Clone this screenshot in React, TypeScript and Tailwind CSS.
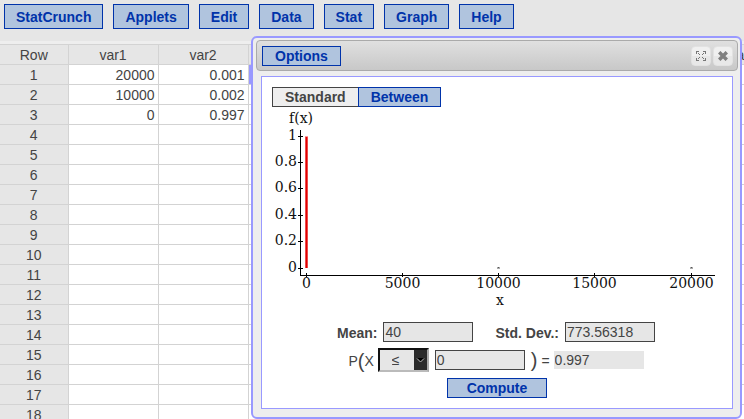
import { useState } from "react";

const menus = ["StatCrunch", "Applets", "Edit", "Data", "Stat", "Graph", "Help"];
const columns = ["var1", "var2", "var3", "var4", "var5", "var6", "var7", "var8"];
const rows = Array.from({ length: 20 }, (_, i) => i + 1);
const data: Record<number, string[]> = {
  1: ["20000", "0.001"],
  2: ["10000", "0.002"],
  3: ["0", "0.997"],
};

const buttonStyle = "border border-[#0033aa] bg-[#b0c4de] font-bold text-[#0033aa]";
const fieldStyle = "h-5 w-[90px] border border-[#444] bg-[#e6e6e6] px-px";
const headCell = "border-[#d3d3d3] px-0 pb-0 pt-0.5 font-normal leading-[17px]";

function DataTable() {
  return (
    <table className="w-[788px] table-fixed border-collapse bg-white text-center">
      <thead>
        <tr className="h-5 bg-[#e6e6e6]">
          <th className={`w-[68px] border-y border-r ${headCell}`}>Row</th>
          {columns.map((name) => (
            <th key={name} className={`w-[90px] border ${headCell}`}>
              {name}
            </th>
          ))}
        </tr>
      </thead>
      <tbody>
        {rows.map((row) => (
          <tr key={row} className="h-5">
            <th className={`border-y border-r bg-[#e6e6e6] ${headCell}`}>{row}</th>
            {columns.map((name, i) => (
              <td
                key={name}
                className={
                  row === 1 && i === 2
                    ? "border border-[#d3d3d3] p-0 shadow-[inset_0_0_0_4px_#9999ff]"
                    : "border border-[#d3d3d3] pb-0 pl-0 pr-[3px] pt-0.5 text-right leading-[17px]"
                }
              >
                {data[row]?.[i]}
              </td>
            ))}
          </tr>
        ))}
      </tbody>
    </table>
  );
}

const yTicks = [
  { y: 28, label: "1" },
  { y: 54, label: "0.8" },
  { y: 80, label: "0.6" },
  { y: 107, label: "0.4" },
  { y: 133, label: "0.2" },
  { y: 160, label: "0" },
];
const xTicks = [
  { x: 44, label: "0" },
  { x: 140, label: "5000" },
  { x: 236, label: "10000" },
  { x: 332, label: "15000" },
  { x: 429, label: "20000" },
];

function DensityChart() {
  return (
    <svg
      viewBox="0 0 470 207"
      className="block w-full font-['DejaVu_Serif',serif] text-[14px]"
      role="img"
      aria-label="Probability function f(x)"
    >
      <g fill="#111">
        <text x="27" y="16">f(x)</text>
        {yTicks.map((t) => (
          <text key={t.label} x="35" y={t.y + 5} textAnchor="end">{t.label}</text>
        ))}
        {xTicks.map((t) => (
          <text key={t.label} x={t.x + 0.5} y="181" textAnchor="middle">{t.label}</text>
        ))}
        <text x="238" y="198" textAnchor="middle">x</text>
      </g>
      <g fill="#000">
        <rect x="38" y="23" width="1" height="146" />
        <rect x="38" y="168" width="415" height="1" />
        {yTicks.map((t) => (
          <rect key={t.label} x="36" y={t.y + 1} width="5" height="1" />
        ))}
        {xTicks.map((t) => (
          <rect key={t.label} x={t.x} y="166" width="1" height="4" />
        ))}
      </g>
      <rect x="43" y="29" width="3" height="132" fill="#ff9999" />
      <rect x="43.5" y="30" width="2" height="131" fill="#e00000" />
      <rect x="235" y="160" width="3" height="2" fill="#aaa" />
      <rect x="236" y="160" width="1" height="1" fill="#555" />
      <rect x="428" y="160" width="3" height="2" fill="#aaa" />
      <rect x="429" y="160" width="1" height="1" fill="#555" />
    </svg>
  );
}

function TitleIcon({ label, children }: { label: string; children: React.ReactNode }) {
  return (
    <button
      aria-label={label}
      className="flex size-5 items-center justify-center rounded border border-[#e2e2e2] bg-linear-to-b from-[#f0f0f0] from-50% to-[#e8e8e8] to-50%"
    >
      {children}
    </button>
  );
}

function Calculator() {
  const [tab, setTab] = useState("Standard");
  return (
    <section
      aria-label="Custom calculator"
      className="absolute left-[251px] right-0.5 top-9 rounded-md border-2 border-[#9999ff] bg-[#eee] pb-2 pl-[3px] pr-0.5 pt-0.5"
    >
      <header className="flex h-[31px] items-center justify-between rounded border border-[#aaa] bg-linear-to-b from-[#e0e0e0] to-[#c8c8c8] py-1 pl-[5px] pr-1">
        <button className={`${buttonStyle} h-5 px-3 leading-[18px]`}>Options</button>
        <div className="flex gap-0.5">
          <TitleIcon label="Maximize">
            <svg width="10" height="10" viewBox="0 0 10 10" fill="#777" shapeRendering="crispEdges">
              <path d="M0 0h3v1H1v2H0zM7 0h3v3H9V1H7zM0 7h1v2h2v1H0zM9 7h1v3H7V9h2zM2 2h1v1H2zM3 3h1v1H3zM7 2h1v1H7zM6 3h1v1H6zM2 7h1v1H2zM3 6h1v1H3zM7 7h1v1H7zM6 6h1v1H6z" />
            </svg>
          </TitleIcon>
          <TitleIcon label="Close">
            <svg width="10" height="10" viewBox="0 0 10 10" stroke="#808080" strokeWidth="3.500">
              <path d="M1.2 1.2l7.6 7.6M8.8 1.2l-7.6 7.6" />
            </svg>
          </TitleIcon>
        </div>
      </header>
      <div className="mx-[5px] mt-[5px] border border-[#9999ff] bg-white pb-2.5 pt-2.5">
        <div className="flex pl-2.5" role="tablist">
          {["Standard", "Between"].map((name) => (
            <button
              key={name}
              role="tab"
              aria-selected={tab === name}
              onClick={() => setTab(name)}
              className={
                tab === name
                  ? "h-5 border border-[#444] bg-[#eee] px-3 font-bold leading-[18px] text-[#444]"
                  : `${buttonStyle} -ml-px h-5 px-3 leading-[18px]`
              }
            >
              {name}
            </button>
          ))}
        </div>
        <DensityChart />
        <div className="flex flex-col items-center gap-1.5 pt-2">
          <div className="flex items-center pr-0.5">
            <label htmlFor="mean" className="pr-1.5 pt-0.5 font-bold leading-[18px]">Mean:</label>
            <input id="mean" className={fieldStyle} defaultValue="40" />
            <label htmlFor="deviation" className="pl-[22px] pr-1.5 pt-0.5 font-bold leading-[18px]">Std. Dev.:</label>
            <input id="deviation" className={fieldStyle} defaultValue="773.56318" />
          </div>
          <div className="flex h-6 items-center pr-0.5">
            <span className="flex items-center pr-1 pt-0.5">
              P<span className="text-[20px]">(</span>X
            </span>
            <div className="relative h-6 w-[51px]">
              <select
                aria-label="Comparison"
                className="block size-full appearance-none border-2 border-b-[#bbb] border-l-[#111] border-r-[#aaa] border-t-[#111] bg-[#e6e6e6] pl-3"
              >
                <option>≤</option>
                <option>≥</option>
                <option>=</option>
              </select>
              <svg className="pointer-events-none absolute right-0.5 top-0.5" width="13" height="20" viewBox="0 0 13 20">
                <rect width="13" height="20" fill="#2b2b2b" />
                <path d="M3 8h7L6.500 12z" fill="#000" />
                <path d="M3 8.500l3.500 3.500L10 8.500" fill="none" stroke="#bbb" />
              </svg>
            </div>
            <input aria-label="x value" className={`${fieldStyle} ml-1.5`} defaultValue="0" />
            <span className="pl-1.5 text-[20px]">)</span>
            <span className="px-1 pt-0.5">=</span>
            <input aria-label="Probability" readOnly className="h-[18px] w-[90px] bg-[#e6e6e6] px-px" value="0.997" />
          </div>
          <button className={`${buttonStyle} h-5 w-[100px] leading-[18px]`}>Compute</button>
        </div>
      </div>
    </section>
  );
}

export default function App() {
  return (
    <main className="relative h-screen overflow-hidden bg-[#eee] font-['Liberation_Sans',Arial,sans-serif] text-[14px] leading-[19px] text-[#444]">
      <nav className="flex h-[41px] gap-2.5 bg-[#e6e6e6] px-1 pt-1">
        {menus.map((name) => (
          <button key={name} className={`${buttonStyle} h-[25px] px-[11px] pt-px`}>
            {name}
          </button>
        ))}
      </nav>
      <div className="overflow-hidden pt-[3px]">
        <DataTable />
      </div>
      <Calculator />
    </main>
  );
}
